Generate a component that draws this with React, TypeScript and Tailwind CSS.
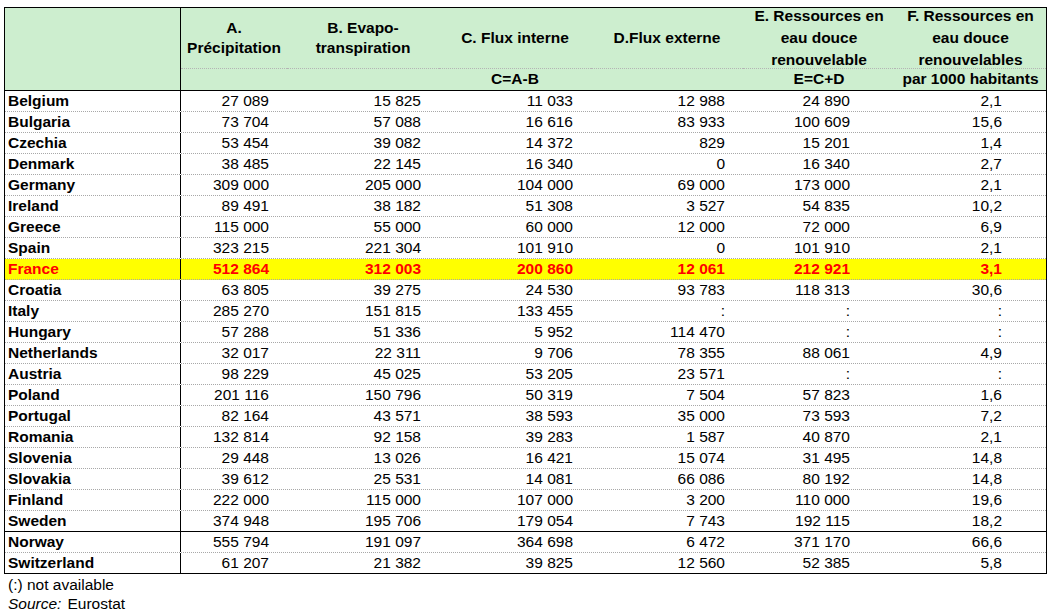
// App.tsx
const ROWS: [string, string, string, string, string, string, string][] = [
  ["Belgium", "27 089", "15 825", "11 033", "12 988", "24 890", "2,1"],
  ["Bulgaria", "73 704", "57 088", "16 616", "83 933", "100 609", "15,6"],
  ["Czechia", "53 454", "39 082", "14 372", "829", "15 201", "1,4"],
  ["Denmark", "38 485", "22 145", "16 340", "0", "16 340", "2,7"],
  ["Germany", "309 000", "205 000", "104 000", "69 000", "173 000", "2,1"],
  ["Ireland", "89 491", "38 182", "51 308", "3 527", "54 835", "10,2"],
  ["Greece", "115 000", "55 000", "60 000", "12 000", "72 000", "6,9"],
  ["Spain", "323 215", "221 304", "101 910", "0", "101 910", "2,1"],
  ["France", "512 864", "312 003", "200 860", "12 061", "212 921", "3,1"],
  ["Croatia", "63 805", "39 275", "24 530", "93 783", "118 313", "30,6"],
  ["Italy", "285 270", "151 815", "133 455", ":", ":", ":"],
  ["Hungary", "57 288", "51 336", "5 952", "114 470", ":", ":"],
  ["Netherlands", "32 017", "22 311", "9 706", "78 355", "88 061", "4,9"],
  ["Austria", "98 229", "45 025", "53 205", "23 571", ":", ":"],
  ["Poland", "201 116", "150 796", "50 319", "7 504", "57 823", "1,6"],
  ["Portugal", "82 164", "43 571", "38 593", "35 000", "73 593", "7,2"],
  ["Romania", "132 814", "92 158", "39 283", "1 587", "40 870", "2,1"],
  ["Slovenia", "29 448", "13 026", "16 421", "15 074", "31 495", "14,8"],
  ["Slovakia", "39 612", "25 531", "14 081", "66 086", "80 192", "14,8"],
  ["Finland", "222 000", "115 000", "107 000", "3 200", "110 000", "19,6"],
  ["Sweden", "374 948", "195 706", "179 054", "7 743", "192 115", "18,2"],
  ["Norway", "555 794", "191 097", "364 698", "6 472", "371 170", "66,6"],
  ["Switzerland", "61 207", "21 382", "39 825", "12 560", "52 385", "5,8"],
];

// right padding of each value column
const PAD = ["pr-[18px]", "pr-[18px]", "pr-[18px]", "pr-[18px]", "pr-[45px]", "pr-[44px]"];

const GRID = "grid grid-cols-[176px_106px_152px_152px_152px_152px_151px]";

function HeadCell({ top, bottom, tight }: { top: string[]; bottom?: string; tight?: boolean }) {
  return (
    <div className="flex flex-col">
      <div
        className={`h-[61px] flex flex-col items-center justify-center text-center border-b border-dotted border-[#b4b4b4] ${
          tight ? "leading-[20px]" : "leading-[22px]"
        }`}
      >
        {top.map((t) => (
          <span key={t} className="whitespace-nowrap">
            {t}
          </span>
        ))}
      </div>
      <div className="h-[20px] leading-[20px] text-center whitespace-nowrap">{bottom}</div>
    </div>
  );
}

export default function App() {
  return (
    <div
      className="w-[1052px] h-[616px] bg-white text-black pt-[7px] pl-[4px] text-[15.5px]"
      style={{ fontFamily: '"Liberation Sans", Arial, sans-serif' }}
    >
      <div className="w-[1043px] border border-black">
        {/* header */}
        <div className={`${GRID} bg-[#cdeecf] font-bold border-b border-black h-[83px]`}>
          <div className="border-r border-black" />
          <HeadCell top={["A.", "Précipitation"]} tight />
          <HeadCell top={["B. Evapo-", "transpiration"]} tight />
          <HeadCell top={["C. Flux interne"]} bottom="C=A-B" />
          <HeadCell top={["D.Flux externe"]} />
          <HeadCell top={["E. Ressources en", "eau douce", "renouvelable"]} bottom="E=C+D" />
          <HeadCell top={["F. Ressources en", "eau douce", "renouvelables"]} bottom="par 1000 habitants" />
        </div>

        {/* body */}
        {ROWS.map((r, i) => {
          const isFrance = r[0] === "France";
          const last = i === ROWS.length - 1;
          const border = r[0] === "Sweden" ? "border-b border-black" : last ? "" : "border-b border-dotted border-[#a8a8a8]";
          return (
            <div
              key={r[0]}
              className={`${GRID} ${last ? "h-[20px]" : "h-[21px]"} leading-[20px] ${border} ${
                isFrance ? "bg-[#ffff00] text-[#ff0000] font-bold" : ""
              }`}
            >
              <div className="border-r border-black pl-[3px] font-bold whitespace-nowrap">{r[0]}</div>
              {r.slice(1).map((v, j) => (
                <div key={j} className={`text-right whitespace-nowrap ${PAD[j]}`}>
                  {v}
                </div>
              ))}
            </div>
          );
        })}
      </div>

      {/* footnotes */}
      <div className="pl-[4px] leading-[19px] pt-[1px]">
        <div>(:) not available</div>
        <div>
          <span className="italic">Source:</span>
          <span className="ml-[6px]">Eurostat</span>
        </div>
      </div>
    </div>
  );
}
